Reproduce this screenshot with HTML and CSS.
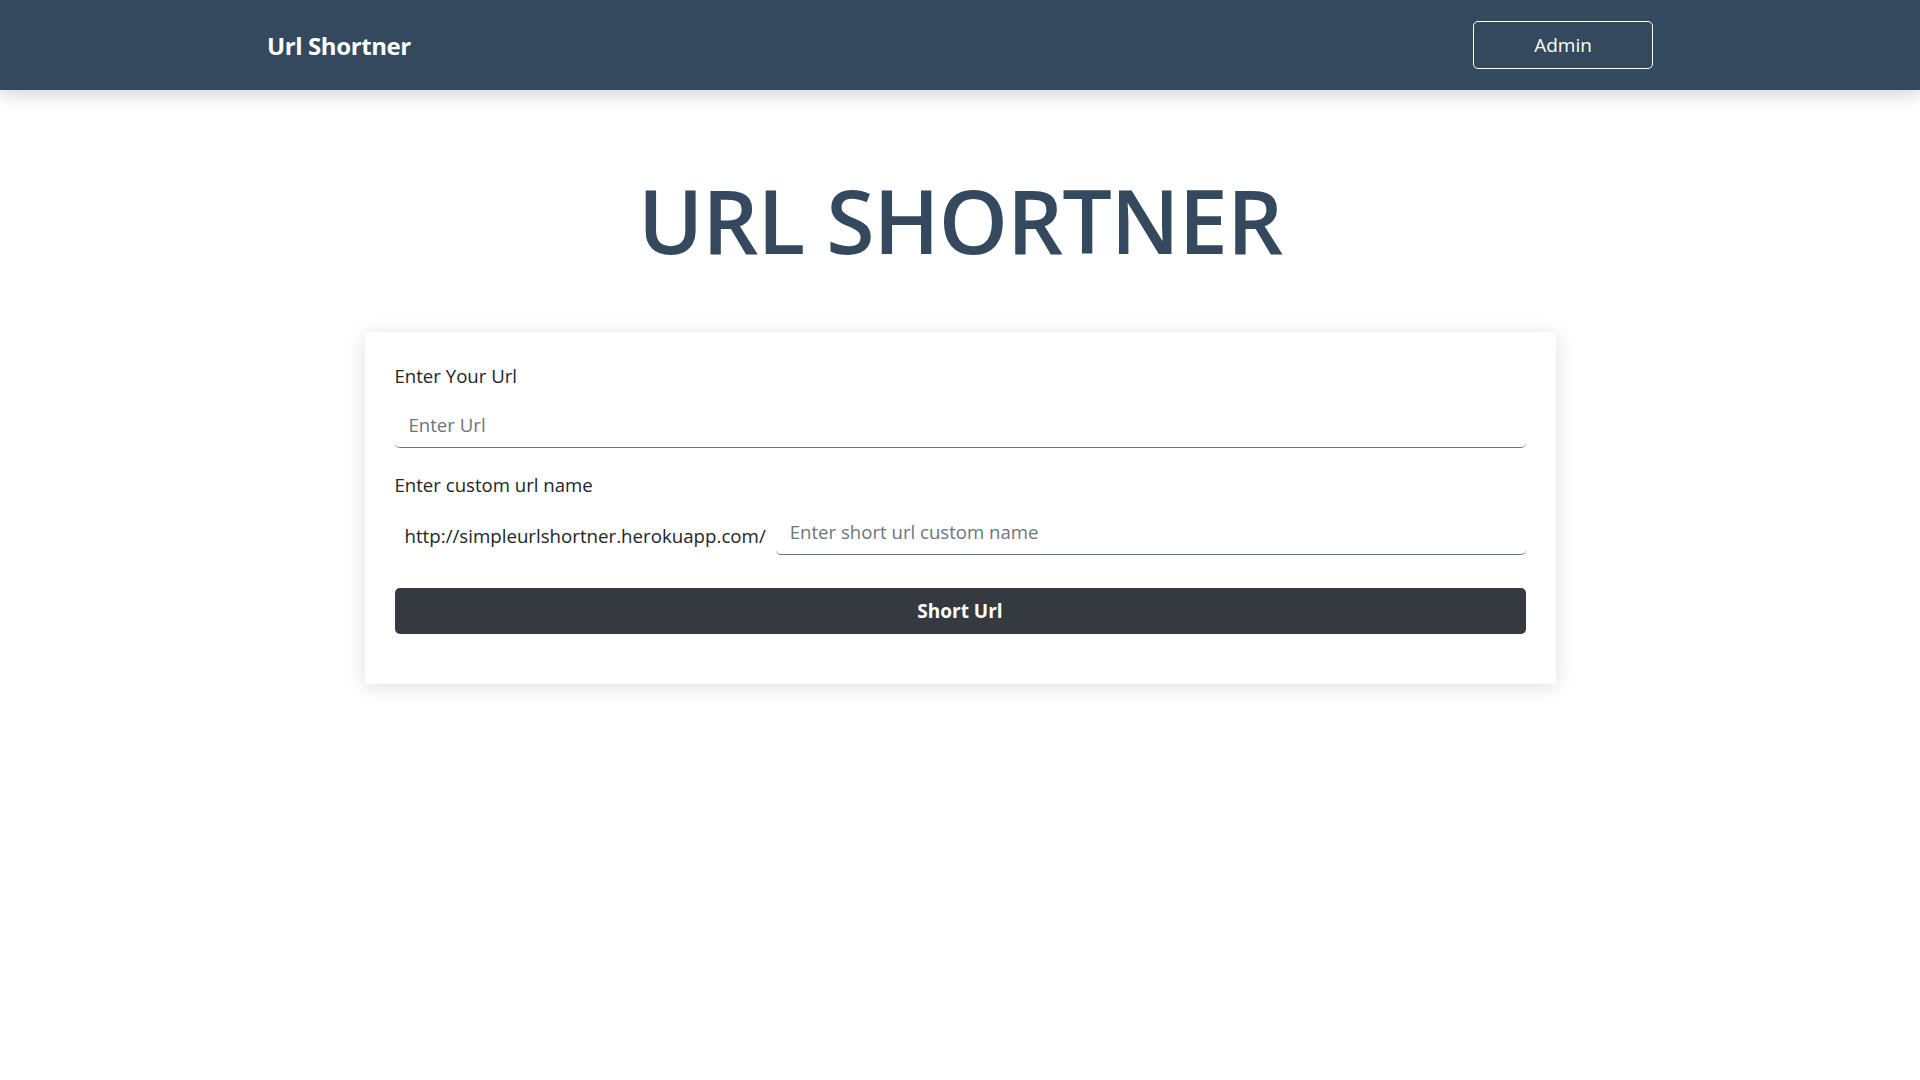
FILE: index.html
```html
<!DOCTYPE html>
<html lang="en">
<head>
<meta charset="utf-8">
<title>Url Shortner</title>
<link rel="stylesheet" href="styles.css">
</head>
<body>
<nav class="navbar">
  <a class="brand" href="#">Url Shortner</a>
  <button class="btn-admin" type="button">Admin</button>
</nav>
<main class="main">
  <h1 class="title">URL SHORTNER</h1>
  <form class="card">
    <label class="label" for="url">Enter Your Url</label>
    <input class="field" id="url" type="text" placeholder="Enter Url">
    <label class="label label-custom" for="custom">Enter custom url name</label>
    <div class="prefix-row">
      <span class="prefix">http://simpleurlshortner.herokuapp.com/</span>
      <input class="field field-custom" id="custom" type="text" placeholder="Enter short url custom name">
    </div>
    <button class="btn-short" type="button">Short Url</button>
  </form>
</main>
</body>
</html>
```
FILE: styles.css
```css
* { box-sizing: border-box; }
html, body { margin: 0; padding: 0; background: #fff; }
body {
  font-family: "Open Sans", "Noto Sans", "Liberation Sans", sans-serif;
  color: #212529;
}
.navbar {
  height: 90px;
  background: #34495e;
  display: flex;
  align-items: center;
  justify-content: space-between;
  padding: 0 267px;
  box-shadow: 0 4px 18px rgba(0, 0, 0, 0.18);
  position: relative;
  z-index: 1;
}
.brand {
  color: #fff;
  text-decoration: none;
  font-weight: 700;
  font-size: 24px;
  letter-spacing: -0.4px;
}
.btn-admin {
  width: 180px;
  height: 48px;
  background: transparent;
  border: 1px solid #fff;
  border-radius: 5px;
  color: #fff;
  font-family: inherit;
  font-size: 19px;
}
.main {
  display: flex;
  flex-direction: column;
  align-items: center;
  padding-bottom: 40px;
}
.title {
  margin: 78px 0 58px;
  font-size: 88px;
  line-height: 1.2;
  font-weight: 600;
  color: #34495e;
  letter-spacing: -1px;
}
.card {
  width: 1191px;
  padding: 30px 30px 50px;
  background: #fff;
  box-shadow: 0 3px 20px rgba(0, 0, 0, 0.13);
  display: flex;
  flex-direction: column;
}
.label {
  font-size: 18.6px;
  line-height: 28px;
}
.field {
  width: 100%;
  height: 46px;
  margin-top: 12px;
  border: 0;
  border-bottom: 1px solid #6c757d;
  border-radius: 5px;
  padding: 0 14px;
  font-family: inherit;
  font-size: 18.6px;
  color: #212529;
  background: #fff;
  outline: none;
}
.field::placeholder { color: #6c757d; }
.label-custom { margin-top: 23px; }
.prefix-row {
  display: flex;
  align-items: flex-end;
  gap: 10px;
  margin-top: 10px;
}
.prefix {
  font-size: 18.7px;
  padding: 0 0 7px 10px;
  white-space: nowrap;
}
.field-custom { margin-top: 0; flex: 1; }
.btn-short {
  margin-top: 33px;
  height: 46px;
  border: 0;
  border-radius: 5px;
  background: #343a40;
  color: #fff;
  font-family: inherit;
  font-weight: 700;
  font-size: 19px;
}
```
